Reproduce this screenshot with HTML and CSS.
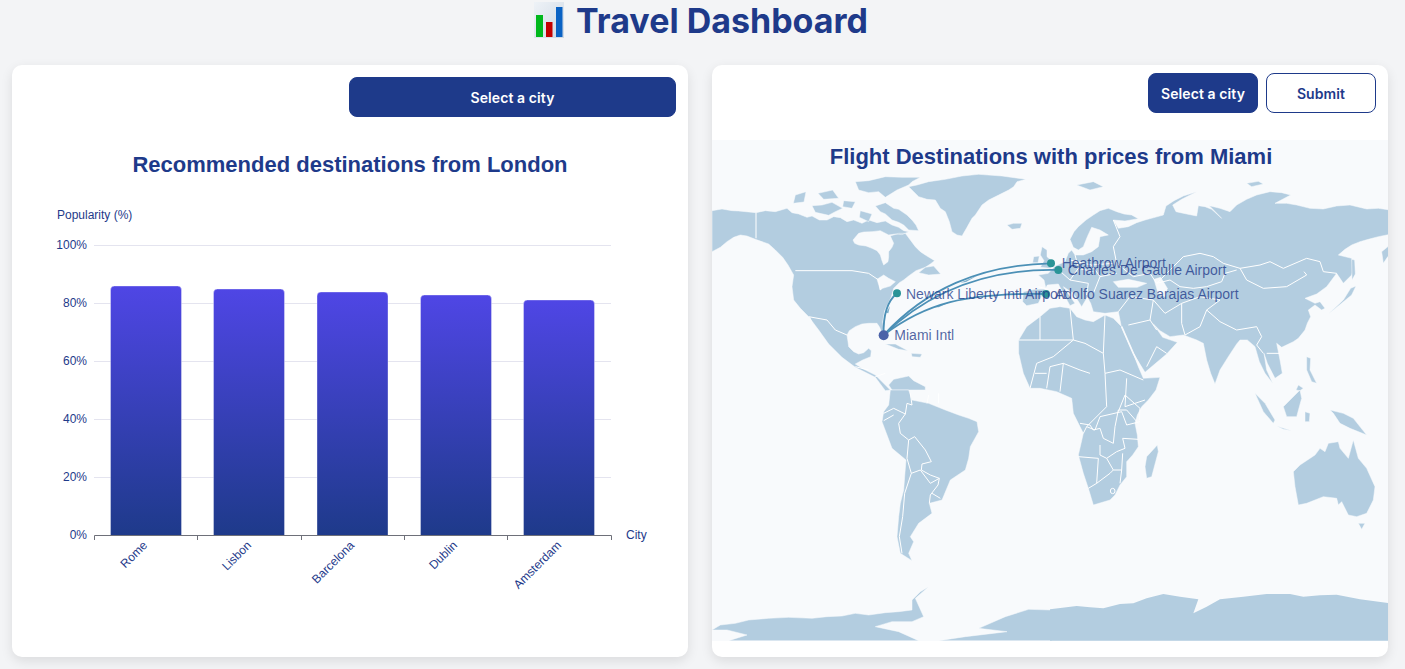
FILE: index.html
```html
<!DOCTYPE html>
<html>
 <head>
  <meta charset="utf-8">
  <title>Travel Dashboard</title>
  <link rel="stylesheet" href="styles.css">
 </head>
 <body>
  <h1 class="pageTitle">
   <svg class="chartEmoji" viewBox="0 0 30 36">
    <defs>
     <linearGradient id="emojiBg" x1="0" y1="0" x2="1" y2="1">
      <stop offset="0" stop-color="#eef2f7"/>
      <stop offset="1" stop-color="#cfd9e4"/>
     </linearGradient>
    </defs>
    <rect width="30" height="36" fill="url(#emojiBg)"/>
    <rect x="2" y="13" width="7" height="22" fill="#00b81c"/>
    <rect x="12" y="20" width="6.5" height="15" fill="#c40000"/>
    <rect x="22" y="5" width="6.5" height="30" fill="#0a62c4"/>
   </svg>
   <span>Travel Dashboard</span>
  </h1>

  <div class="cards">
   <div class="card">
    <div class="cardHead">
     <button class="btn btnWide">Select a city</button>
    </div>
    <svg class="barChart" viewBox="12 125 676 532">
     <defs>
      <linearGradient id="barFill" x1="0" y1="0" x2="0" y2="1">
       <stop offset="0" stop-color="#4f46e5"/>
       <stop offset="1" stop-color="#1e3a8a"/>
      </linearGradient>
     </defs>
     <text class="chartTitle" x="350" y="172">Recommended destinations from London</text>
     <text class="axisText" x="57" y="219">Popularity (%)</text>

     <g class="gridLines">
      <line x1="94" x2="611" y1="245.5" y2="245.5"/>
      <line x1="94" x2="611" y1="303.5" y2="303.5"/>
      <line x1="94" x2="611" y1="361.5" y2="361.5"/>
      <line x1="94" x2="611" y1="419.5" y2="419.5"/>
      <line x1="94" x2="611" y1="477.5" y2="477.5"/>
     </g>

     <g class="axisText yLabels">
      <text x="87" y="249">100%</text>
      <text x="87" y="307">80%</text>
      <text x="87" y="365">60%</text>
      <text x="87" y="423">40%</text>
      <text x="87" y="481">20%</text>
      <text x="87" y="539">0%</text>
     </g>

     <g class="bars">
      <path d="M110.5 535.5V290a4 4 0 0 1 4-4h63a4 4 0 0 1 4 4V535.5z"/>
      <path d="M213.5 535.5V293a4 4 0 0 1 4-4h63a4 4 0 0 1 4 4V535.5z"/>
      <path d="M317 535.5V296a4 4 0 0 1 4-4h63a4 4 0 0 1 4 4V535.5z"/>
      <path d="M420.5 535.5V299a4 4 0 0 1 4-4h63a4 4 0 0 1 4 4V535.5z"/>
      <path d="M523.5 535.5V304a4 4 0 0 1 4-4h63a4 4 0 0 1 4 4V535.5z"/>
     </g>

     <path class="axisLine" d="M94.5 540V535.5H611.5V540M197.5 535.5V540M301.5 535.5V540M404.5 535.5V540M507.5 535.5V540"/>

     <g class="axisText xLabels">
      <text transform="translate(148 546) rotate(-45)">Rome</text>
      <text transform="translate(252 546) rotate(-45)">Lisbon</text>
      <text transform="translate(355 546) rotate(-45)">Barcelona</text>
      <text transform="translate(458 546) rotate(-45)">Dublin</text>
      <text transform="translate(562 546) rotate(-45)">Amsterdam</text>
     </g>
     <text class="axisText" x="626" y="539">City</text>
    </svg>
   </div>

   <div class="card">
    <div class="cardHead cardHeadMap">
     <button class="btn">Select a city</button>
     <button class="btn btnOutline">Submit</button>
    </div>
    <!-- map units are 3x screen pixels, it made reading the coasts off easier -->
    <svg class="worldMap" viewBox="0 0 2031 1503">
     <rect class="ocean" width="2031" height="1503"/>

     <g class="land">
      <!-- north america -->
      <path d="M0 212L30 207 60 212 80 213 132 218 160 212 190 215 225 205 240 218 260 222 285 232 300 228 322 240 345 240 365 230 385 233 405 245 425 240 450 250 470 240 495 248 520 243 540 255 560 262 575 272 590 275 570 284 550 282 530 285 505 272 480 275 455 276 440 280 423 300 428 310 440 315 462 318 480 325 495 332 505 345 510 362 515 375 528 365 530 350 530 335 540 322 545 310 535 288 560 280 580 280 595 300 610 320 625 335 640 345 668 362 655 372 640 382 612 392 590 408 575 420 562 428 550 440 545 445 538 470 528 492 518 512 512 545 516 568 510 580 503 562 495 550 470 550 450 552 430 560 412 572 405 585 408 605 410 620 425 635 440 642 455 638 470 625 478 632 476 650 452 660 430 672 450 685 490 705 535 750 520 752 490 712 430 682 390 652 350 612 320 570 290 530 265 505 245 480 240 440 245 405 228 375 212 352 190 330 170 312 130 298 105 288 85 285 65 292 45 305 25 322 0 335z"/>
      <path class="sea" d="M495 418L515 405 530 415 550 425 535 438 512 445 505 450z"/>
      <path class="strait" d="M292 532L308 570 325 605"/>
      <path d="M620 398L640 382 665 378 686 402 650 405z"/>
      <path d="M590 140L615 135 650 125 700 118 750 108 800 103 870 108 942 118 915 125 905 140 890 150 860 165 830 180 810 195 790 225 780 235 765 262 750 288 735 285 720 275 712 245 700 215 685 205 670 180 645 178 620 170 605 155z"/>
      <path d="M885 255L905 250 930 250 925 265 900 268z"/>
      <path d="M490 198L520 188 545 205 560 208 585 225 600 240 612 255 620 272 590 270 575 255 560 247 540 240 520 222 505 215z"/>
      <path d="M430 125L470 122 520 110 570 112 625 112 600 125 590 135 555 150 520 172 500 155 470 158 440 150z"/>
      <path d="M300 197L330 195 360 187 392 205 370 215 350 226 310 217z"/>
      <path d="M250 165L282 155 276 186 244 190z"/>
      <path d="M318 160L362 150 380 175 335 178z"/>
      <path d="M395 182L430 185 420 205 392 200z"/>
      <path d="M445 212L480 222 470 245 442 232z"/>
      <path d="M520 612L550 612 588 632 560 628z"/>
      <path d="M598 640L630 642 625 652 600 650z"/>
      <path d="M530 735L545 718 590 708 605 722 640 740 640 750 540 750z"/>
      <!-- uk and ireland -->
      <path d="M990 320L1005 330 1005 350 1022 365 1016 385 985 382 996 362 985 345z"/>
      <path d="M965 350L982 348 978 368 962 368z"/>
     </g>

     <g class="land" transform="translate(1014 0)">
      <!-- eurasia -->
      <path d="M-80 455L-45 448 -12 447 -18 420 -35 405 -5 400 15 378 45 365 55 340 65 330 75 345 100 345 125 335 145 320 150 290 175 285 150 270 125 262 112 290 100 320 85 330 70 322 60 298 72 275 85 260 108 240 130 225 150 212 175 205 200 215 222 222 245 225 265 236 225 243 190 240 205 265 235 260 260 248 285 240 315 232 340 225 348 198 372 182 400 168 440 155 395 178 368 195 378 215 410 222 440 228 445 197 465 200 485 208 515 235 478 197 510 205 540 215 560 195 590 178 620 165 660 155 695 158 722 165 675 190 710 190 740 195 780 205 820 207 860 198 900 195 950 207 985 205 1020 210 1020 283 985 290 955 298 930 305 905 315 885 328 865 345 905 355 912 385 905 405 880 430 860 400 845 420 830 440 800 462 765 475 795 490 810 485 825 505 815 510 795 495 775 510 782 530 772 550 765 570 745 595 730 605 695 622 680 610 690 660 697 700 675 715 652 670 642 640 650 690 668 730 645 700 628 665 615 620 592 600 570 600 560 612 535 650 510 690 495 732 482 700 470 660 460 610 440 600 400 585 360 590 330 572 310 552 338 592 382 607 350 642 285 697 250 640 215 565 205 515 165 520 130 515 122 490 112 472 95 500 70 460 40 440 75 490 60 497 25 432 -8 435 -22 462 -35 490 -70 497 -82 485z"/>
      <path class="sea" d="M190 425L235 418 290 430 262 442 205 442z"/>
      <path class="sea" d="M312 418L332 412 352 445 345 470 325 462z"/>
      <path d="M80 135L130 125 160 140 120 150z"/>
      <path d="M590 130L625 124 640 132 605 140z"/>
      <path d="M995 335L1020 315 1020 340 1000 370z"/>
      <path d="M905 358L914 360 916 402 906 420z"/>
      <path d="M918 438L905 465 850 510 835 522 880 480 902 445z"/>
      <path d="M770 650L782 655 780 690 800 730 785 725 770 690z"/>
      <path d="M745 735L760 745 750 752 738 750z"/>
      <!-- africa -->
      <path d="M-94 600L-70 560 -30 530 0 505 30 500 60 505 80 530 105 540 130 545 165 525 190 535 215 560 232 600 250 640 265 680 280 715 330 712 318 750 295 780 275 800 262 825 255 850 262 885 265 920 248 945 230 965 230 1010 210 1035 195 1065 180 1080 130 1095 115 1045 100 1000 85 945 92 915 100 880 85 850 70 820 65 775 20 755 -30 745 -60 745 -80 700 -94 640z"/>
      <path class="strait" d="M215 560L250 640 282 705"/>
      <path d="M322 915L325 935 305 1010 290 1015 285 980 290 950z"/>
     </g>

     <g class="land" transform="translate(0 750)">
      <!-- south america -->
      <path d="M530 45L515 65 510 95 525 135 540 175 582 210 578 260 575 300 565 340 560 380 555 440 565 490 600 512 590 490 605 455 595 440 620 400 660 370 652 340 690 330 715 270 760 240 770 205 775 170 800 125 795 95 770 85 740 75 700 60 650 40 600 30 590 0 535 0z"/>
      <!-- antarctica, west half -->
      <path d="M0 720L25 705 70 700 110 690 170 685 230 682 300 685 345 680 390 678 430 670 470 675 520 668 560 665 600 660 600 630 625 605 650 590 610 625 635 680 600 695 540 695 490 710 560 725 620 752 680 752 760 740 885 725 800 715 880 680 950 658 1020 660 1020 752 50 752 105 735 45 720z"/>
     </g>

     <g class="land seamless" transform="translate(1014 750)">
      <path d="M0 658L80 648 120 652 160 655 210 642 250 640 290 625 340 612 390 620 445 628 430 670 470 650 510 628 580 620 650 612 720 612 760 620 810 616 860 614 930 628 1020 640 1020 752 0 752z"/>
     </g>
     <g class="land" transform="translate(1014 750)">
      <!-- australia and the islands -->
      <path d="M730 245L750 225 795 195 810 175 825 185 835 160 865 155 870 175 895 205 910 150 925 205 950 235 975 290 970 330 950 370 920 380 895 375 875 335 865 345 860 325 820 320 770 340 745 345 735 290z"/>
      <path d="M925 400L945 400 935 418z"/>
      <path d="M615 10L645 40 675 90 670 100 640 65z"/>
      <path d="M680 108L725 122 700 118z"/>
      <path d="M700 50L720 30 750 0 755 25 740 80 710 80z"/>
      <path d="M765 65L780 70 778 95 765 95z"/>
      <path d="M840 60L880 70 910 85 950 135 900 115 870 100 850 70z"/>
     </g>

     <g class="borders">
      <!-- north america -->
      <path d="M132 218V295M250 392H420L470 400 500 420 505 450M290 530L345 540 370 570 405 585"/>
      <path d="M430 680L470 690M490 710L520 700"/>
     </g>
     <g class="borders" transform="translate(1014 0)">
      <!-- asia -->
      <path d="M400 350L450 340 490 350 520 370 570 385 630 375 660 365 700 385 770 355 810 365 820 395 860 400"/>
      <path d="M570 385L590 420 640 445 710 440 770 405 762 395"/>
      <path d="M320 430L360 420 390 440 430 445 470 440 515 425 525 400 560 390"/>
      <path d="M470 510L510 545 560 570 620 560 635 590 620 615 640 640M650 640L690 640"/>
      <path d="M395 490V550L405 585M395 490L450 470 510 480 470 510 450 560 405 585"/>
      <path d="M190 320L210 290 190 240M190 320L200 370 250 410 300 400 320 430 400 350"/>
      <path d="M240 470L310 480 345 520 395 490M240 470L205 515M310 480L300 540 320 570M235 555L300 540M350 640L320 620 290 680"/>
      <!-- europe -->
      <path d="M-35 440L-5 448M15 380L60 420M60 360L125 375 150 410 130 460M60 420L115 430M75 345L85 380M115 430L110 465"/>
      <path d="M125 375L190 370M150 410L200 400M85 385L130 395M60 420L85 385"/>
      <!-- africa -->
      <path d="M60 505L70 600 105 610 160 640 165 525M-30 530L-30 600 -94 600M-30 600L70 600M-60 745L-40 670 10 650 70 600M160 640L165 700 210 690 280 720M165 700L170 800 110 860 100 880M230 715L225 800 285 780M110 860L135 870 150 830 215 815 230 855 270 845"/>
      <path d="M-10 745L0 680 40 670M30 755L40 670 90 690 120 700M-45 700L-10 700"/>
     </g>
     <g class="borders" transform="translate(1014 750)">
      <path d="M90 100L120 105 130 120 150 115 160 145 190 160 195 110 205 60 230 60 265 100M205 65L225 15 270 55 268 90"/>
      <path d="M150 165V195L170 205 200 185 225 175 218 145 265 148"/>
      <path d="M85 200L145 205 140 280 115 295M170 205L190 240 215 240 218 190M140 280L180 250 190 240M215 240L210 280"/>
      <ellipse cx="188" cy="303" rx="7" ry="8" fill="none"/>
     </g>
     <g class="borders" transform="translate(0 750)">
      <!-- south america -->
      <path d="M515 70L545 55 580 72M515 92L545 75M580 72L560 100 565 130 590 150 608 140 640 180 658 215 630 222 628 240 655 255 682 265 678 285 655 315 652 340"/>
      <path d="M580 72L585 40 600 45 595 10M645 40L650 15M680 40L680 10"/>
      <path d="M590 150L585 205 598 250 625 240 655 280 682 265"/>
      <path d="M598 250L578 310 572 380 562 440 570 490"/>
      <path d="M660 310L685 325"/>
     </g>

     <!-- flight arcs -->
     <g class="arcs">
      <path d="M515 585Q512 495 555 460"/>
      <path d="M515 585C640 450 800 375 1017 370"/>
      <path d="M515 585C650 455 820 385 1039 390"/>
      <path d="M515 585C640 490 760 458 1000 462"/>
     </g>
     <g class="arcHeads">
      <path d="M522 518L534 498 529 520z"/>
      <path d="M745 428L798 406 762 426z"/>
      <path d="M665 502L720 484 680 502z"/>
     </g>
     <circle class="dot" cx="555" cy="460" r="12"/>
     <circle class="dot" cx="1017" cy="370" r="12"/>
     <circle class="dot" cx="1039" cy="390" r="12"/>
     <circle class="dot" cx="1002" cy="462" r="12"/>
     <circle class="dot dotHome" cx="515" cy="586" r="15"/>

     <g class="mapLabels">
      <text x="582" y="476">Newark Liberty Intl Airport</text>
      <text x="1029" y="476">Adolfo Suarez Barajas Airport</text>
      <text x="1049" y="385">Heathrow Airport</text>
      <text x="1067" y="406">Charles De Gaulle Airport</text>
      <text x="547" y="601">Miami Intl</text>
     </g>
     <text class="mapTitle" x="1017" y="73">Flight Destinations with prices from Miami</text>
    </svg>
   </div>
  </div>
 </body>
</html>
```

FILE: styles.css
```css
html, body {
  margin: 0;
  height: 100%;
  overflow: hidden;
}

body {
  background-color: #f3f4f6;
  font-family: Inter, "Liberation Sans", sans-serif;
  color: #1e3a8a;
}

.pageTitle {
  display: flex;
  justify-content: center;
  align-items: flex-start;
  gap: 12px;
  margin: 0;
  padding: 2px 3px 0 0;
  height: 65px;
  box-sizing: border-box;
  font-size: 34px;
  font-weight: 700;
  line-height: 38px;
}

.chartEmoji {
  width: 30px;
  height: 36px;
  flex: none;
}

.cards {
  display: grid;
  grid-template-columns: 676px 676px;
  gap: 24px;
  padding-left: 12px;
}

.card {
  height: 592px;
  background-color: #ffffff;
  border-radius: 10px;
  box-shadow: 0 4px 12px rgba(0, 0, 0, 0.1);
  overflow: hidden;
  display: flex;
  flex-direction: column;
}

.cardHead {
  display: flex;
  justify-content: flex-end;
  padding: 12px 12px 8px 12px;
}

.cardHeadMap {
  gap: 8px;
  padding: 8px 12px 27px 12px;
}

.btn {
  width: 110px;
  height: 40px;
  border: 1px solid #1e3a8a;
  border-radius: 8px;
  background-color: #1e3a8a;
  color: #ffffff;
  font-family: Inter, "Liberation Sans", sans-serif;
  font-size: 14px;
  font-weight: 600;
  letter-spacing: 0.1px;
  padding: 0;
}

.btnWide {
  width: 327px;
}

.btnOutline {
  background-color: #ffffff;
  color: #1e3a8a;
}

.barChart {
  display: block;
  width: 676px;
  height: 532px;
}

.chartTitle {
  font-family: "Liberation Sans", sans-serif;
  font-size: 22px;
  font-weight: 700;
  fill: #1e3a8a;
  text-anchor: middle;
}

.axisText {
  font-family: "Liberation Sans", sans-serif;
  font-size: 12px;
  fill: #1e3a8a;
}

.yLabels {
  text-anchor: end;
}

.xLabels {
  text-anchor: end;
}

.gridLines line {
  stroke: #e4e4ef;
  stroke-width: 1;
}

.bars path {
  fill: url(#barFill);
  stroke: rgba(255, 255, 255, 0.35);
  stroke-width: 1;
}

.axisLine {
  fill: none;
  stroke: #6e7079;
  stroke-width: 1;
}

.worldMap {
  display: block;
  width: 677px;
  height: 501px;
  flex: none;
}

.ocean {
  fill: #f8fafc;
}

.land path {
  fill: #b3cde0;
  stroke: #f8fafc;
  stroke-width: 1.5;
  stroke-linejoin: round;
}

.land .sea {
  fill: #f8fafc;
}

.land .strait {
  fill: none;
  stroke-width: 5;
}

.seamless path {
  stroke: none;
}

.borders path, .borders ellipse {
  fill: none;
  stroke: #ffffff;
  stroke-width: 3;
  stroke-linejoin: round;
}

.arcs path {
  fill: none;
  stroke: #4c90b6;
  stroke-width: 5.5;
}

.arcHeads path {
  fill: #4c90b6;
  opacity: 0.7;
}

.dot {
  fill: #2a9497;
}

.dotHome {
  fill: #4b62a8;
}

.mapLabels text {
  font-family: "Liberation Sans", sans-serif;
  font-size: 42px;
  fill: #1e3a8a;
  fill-opacity: 0.78;
}

.mapTitle {
  font-family: "Liberation Sans", sans-serif;
  font-size: 66px;
  font-weight: 700;
  fill: #1e3a8a;
  text-anchor: middle;
}
```
